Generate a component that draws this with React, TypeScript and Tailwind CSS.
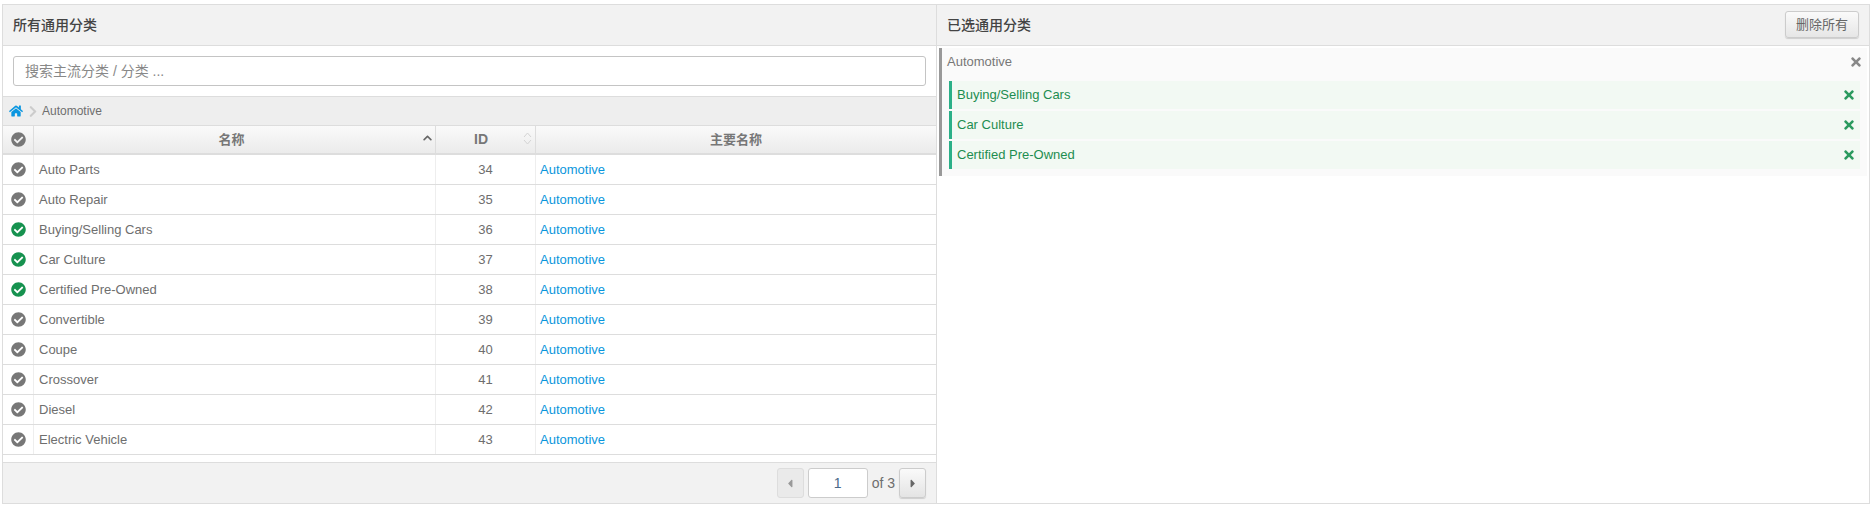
import React from 'react';
import { FaCheckCircle, FaHome, FaChevronRight, FaChevronUp, FaTimes, FaCaretLeft, FaCaretRight } from 'react-icons/fa';

interface Row {
  name: string;
  id: number;
  selected?: boolean;
}

const rows: Row[] = [
  { name: 'Auto Parts', id: 34 },
  { name: 'Auto Repair', id: 35 },
  { name: 'Buying/Selling Cars', id: 36, selected: true },
  { name: 'Car Culture', id: 37, selected: true },
  { name: 'Certified Pre-Owned', id: 38, selected: true },
  { name: 'Convertible', id: 39 },
  { name: 'Coupe', id: 40 },
  { name: 'Crossover', id: 41 },
  { name: 'Diesel', id: 42 },
  { name: 'Electric Vehicle', id: 43 },
];

const picked = rows.filter((r) => r.selected);

const App: React.FC = () => {
  return (
    <div className="w-[1876px] h-[508px] bg-white pt-[4px] pl-[2px] font-['Liberation_Sans','Noto_Sans_CJK_SC',sans-serif] text-[13px] text-[#6e6e6e]">
      <div className="w-[1868px] h-[500px] border border-[#ddd] flex">
        {/* left panel */}
        <div className="w-[934px] border-r border-[#ddd] flex flex-col">
          <div className="h-[41px] shrink-0 bg-[#f2f2f2] border-b border-[#ddd] flex items-center pl-[10px] text-[14px] font-medium text-[#444]">
            所有通用分类
          </div>
          <div className="h-[50px] shrink-0 pt-[10px] pl-[10px] pr-[10px]">
            <input
              readOnly
              placeholder="搜索主流分类 / 分类 ..."
              className="w-[913px] h-[30px] border border-[#c4c4c4] rounded-[3px] px-[11px] text-[14px] text-[#555] placeholder:text-[#888] outline-none"
            />
          </div>
          <div className="h-[29px] shrink-0 bg-[#eee] border-t border-[#ddd] flex items-center pl-[6px] text-[12px] text-[#6e6e6e]">
            <FaHome className="text-[#0a96e0] w-[14px] h-[14px]" />
            <FaChevronRight className="text-[#ccc] w-[8px] h-[13px] ml-[6px]" />
            <span className="ml-[5px]">Automotive</span>
          </div>
          <div className="h-[30px] shrink-0 grid grid-cols-[31px_402px_100px_1fr] border-t border-b-2 border-[#ddd] bg-gradient-to-b from-[#fafafa] to-[#ebebeb] font-bold text-[#777]">
            <div className="border-r border-[#ddd] flex items-center justify-center">
              <FaCheckCircle className="text-[#777] w-[15px] h-[15px]" />
            </div>
            <div className="relative border-r border-[#ddd] flex items-center justify-center pr-[6px]">
              名称
              <FaChevronUp className="absolute right-[3px] top-[7px] text-[#666] w-[9px] h-[10px]" />
            </div>
            <div className="relative border-r border-[#ddd] flex items-center justify-center pr-[9px] text-[14px]">
              ID
              <svg className="absolute right-[3px] top-[6px] w-[9px] h-[6px]" viewBox="0 0 9 6" fill="none" stroke="#d4d4d4">
                <polyline points="1,5 4.5,1 8,5" />
              </svg>
              <svg className="absolute right-[3px] top-[13px] w-[9px] h-[6px]" viewBox="0 0 9 6" fill="none" stroke="#d4d4d4">
                <polyline points="1,1 4.5,5 8,1" />
              </svg>
            </div>
            <div className="flex items-center justify-center">主要名称</div>
          </div>
          {rows.map((row) => (
            <div key={row.id} className="h-[30px] shrink-0 grid grid-cols-[31px_402px_100px_1fr] border-b border-[#ddd]">
              <div className="border-r border-[#eee] flex items-center justify-center">
                <FaCheckCircle className={`w-[15px] h-[15px] ${row.selected ? 'text-[#16924f]' : 'text-[#777]'}`} />
              </div>
              <div className="border-r border-[#eee] flex items-center pl-[5px]">{row.name}</div>
              <div className="border-r border-[#eee] flex items-center justify-center">{row.id}</div>
              <div className="flex items-center pl-[4px] text-[#0a96dc]">Automotive</div>
            </div>
          ))}
          <div className="h-[7px] shrink-0" />
          <div className="flex-1 bg-[#f2f2f2] border-t border-[#ddd] flex items-center justify-end pr-[10px] gap-[4px]">
            <button className="w-[27px] h-[30px] border border-[#ddd] rounded-[3px] bg-[#eaeaea] flex items-center justify-center text-[#999]">
              <FaCaretLeft className="w-[8px] h-[13px]" />
            </button>
            <input
              readOnly
              value="1"
              className="w-[60px] h-[30px] border border-[#ccc] rounded-[3px] bg-white text-center text-[14px] text-[#4a6a8a] outline-none"
            />
            <span className="text-[14px] text-[#6e6e6e]">of 3</span>
            <button className="w-[27px] h-[30px] border border-[#ccc] rounded-[3px] bg-gradient-to-b from-[#fafafa] to-[#e4e4e4] shadow-[0_1px_1px_rgba(0,0,0,0.15)] flex items-center justify-center text-[#666]">
              <FaCaretRight className="w-[8px] h-[13px]" />
            </button>
          </div>
        </div>

        {/* right panel */}
        <div className="flex-1 flex flex-col">
          <div className="h-[41px] shrink-0 bg-[#f2f2f2] border-b border-[#ddd] flex items-center justify-between pl-[10px] pr-[10px] text-[14px] font-medium text-[#444]">
            已选通用分类
            <button className="w-[74px] h-[27px] -mt-[1px] border border-[#ccc] rounded-[3px] bg-gradient-to-b from-[#fafafa] to-[#e6e6e6] shadow-[0_1px_1px_rgba(0,0,0,0.15)] text-[13px] font-normal text-[#666]">
              删除所有
            </button>
          </div>
          <div className="mt-[2px] ml-[2px] mr-[2px] h-[128px] border-l-[3px] border-[#999] bg-[#fafafa]">
            <div className="h-[27px] mb-[6px] flex items-center justify-between pl-[5px] pr-[6px] text-[#777]">
              Automotive
              <FaTimes className="text-[#888] w-[10px] h-[14px]" />
            </div>
            <div className="flex flex-col gap-[2px] ml-[7px] mr-[7px]">
              {picked.map((row) => (
                <div key={row.id} className="h-[28px] border-l-[3px] border-[#2bb088] bg-[#f2f9f3] flex items-center justify-between pl-[5px] pr-[6px] text-[#1d8d50]">
                  {row.name}
                  <FaTimes className="text-[#2a9a5e] w-[10px] h-[14px]" />
                </div>
              ))}
            </div>
          </div>
        </div>
      </div>
    </div>
  );
};

export default App;
